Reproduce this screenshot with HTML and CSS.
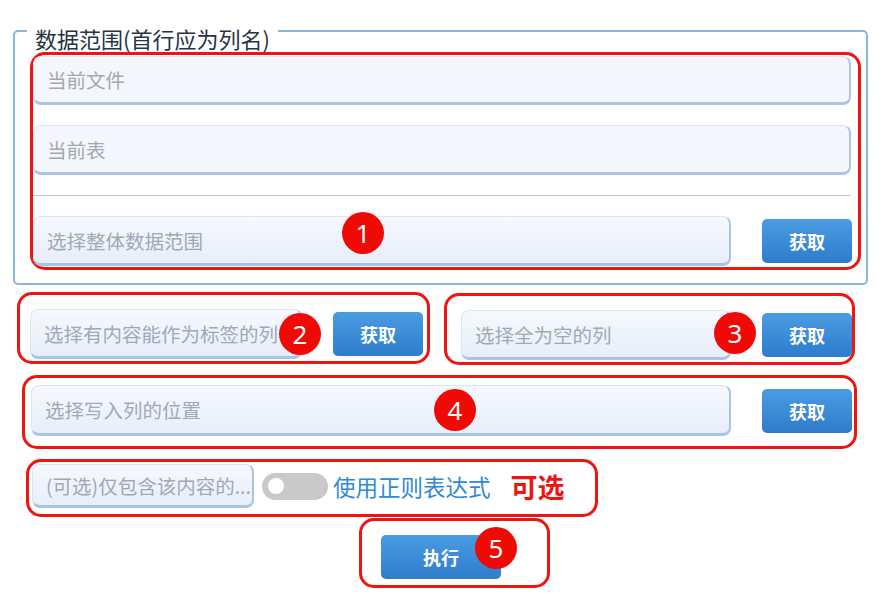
FILE: index.html
```html
<!DOCTYPE html>
<html lang="zh-CN">
<head>
<meta charset="utf-8">
<title>数据范围</title>
<link rel="stylesheet" href="styles.css">
</head>
<body>
<fieldset class="range">
  <legend class="range-title">数据范围(首行应为列名)</legend>
  <div class="mark mark-1">
    <input class="field field-full" placeholder="当前文件">
    <input class="field field-full field-second" placeholder="当前表">
    <hr class="sep">
    <div class="row">
      <input class="field field-grad field-main" placeholder="选择整体数据范围">
      <button class="btn">获取</button>
    </div>
    <span class="badge badge-1">1</span>
  </div>
</fieldset>

<div class="pair">
  <div class="mark mark-2">
    <div class="row">
      <input class="field field-grad field-half-a" placeholder="选择有内容能作为标签的列">
      <button class="btn">获取</button>
    </div>
    <span class="badge badge-2">2</span>
  </div>
  <div class="mark mark-3">
    <div class="row">
      <input class="field field-grad field-half-b" placeholder="选择全为空的列">
      <button class="btn">获取</button>
    </div>
    <span class="badge badge-3">3</span>
  </div>
</div>

<div class="mark mark-4">
  <div class="row">
    <input class="field field-grad field-main field-write" placeholder="选择写入列的位置">
    <button class="btn">获取</button>
  </div>
  <span class="badge badge-4">4</span>
</div>

<div class="mark mark-5">
  <input class="field field-grad field-filter" placeholder="(可选)仅包含该内容的...">
  <span class="switch"><span class="knob"></span></span>
  <span class="regex-label">使用正则表达式</span>
  <span class="optional">可选</span>
</div>

<div class="mark mark-6">
  <button class="btn btn-run">执行</button>
  <span class="badge badge-5">5</span>
</div>
</body>
</html>
```

FILE: styles.css
```css
* {
  box-sizing: border-box;
}

html,
body {
  margin: 0;
  background: #ffffff;
}

body {
  width: 888px;
  height: 602px;
  overflow: hidden;
  font-family: "Noto Sans CJK SC", "Noto Sans", sans-serif;
}

.range {
  margin: 10px 0 0 13px;
  width: 855px;
  min-width: 0;
  border: 2px solid #88b6dc;
  border-radius: 5px;
  padding: 0 5px 13px 15px;
}

.range-title {
  margin-left: -3px;
  padding: 14px 8px 0;
  font-size: 22px;
  line-height: 28px;
  color: #263444;
}

.mark {
  position: relative;
  border: 3px solid #f01410;
  border-radius: 15px;
}

.mark-1 {
  padding: 1px 7px 1px 0;
}

.row {
  display: flex;
  align-items: center;
  gap: 31px;
}

.field {
  display: block;
  height: 50px;
  margin: 0;
  border: 1px solid #d9e5f4;
  border-right: 2px solid #aac5e3;
  border-bottom: 3px solid #aac5e3;
  border-radius: 8px;
  background: #f4f7fd;
  padding: 0 13px;
  font-family: inherit;
  font-size: 19.5px;
  color: #333333;
  outline: none;
  flex: none;
}

.field::placeholder {
  color: #a0a9b4;
}

.field-full {
  width: 100%;
  height: 49px;
}

.field-second {
  margin-top: 20px;
  height: 50px;
}

.sep {
  margin: 20px 0;
  height: 0;
  border: 0;
  border-top: 1px solid #c6c6c6;
}

.field-grad {
  background: linear-gradient(#f6f9fe, #e6eefa);
}

.field-main {
  width: 698px;
}

.btn {
  flex: none;
  width: 90px;
  height: 44px;
  border: 0;
  border-radius: 5px;
  background: linear-gradient(#4a9ce2, #2e7ccb);
  color: #ffffff;
  font-family: inherit;
  font-size: 18px;
  font-weight: 700;
  padding: 0;
}

.badge {
  position: absolute;
  width: 42px;
  height: 42px;
  border-radius: 50%;
  background: #f00a06;
  color: #ffffff;
  font-family: "Noto Sans", sans-serif;
  font-size: 26px;
  line-height: 42px;
  text-align: center;
}

.badge-1 {
  left: 309px;
  top: 157px;
}

.pair {
  display: flex;
  gap: 14px;
  margin: 7px 0 0 17px;
}

.mark-2 {
  width: 413px;
  height: 72px;
  padding: 14px 4px 0 10px;
}

.field-half-a {
  width: 272px;
}

.badge-2 {
  left: 259px;
  top: 18px;
}

.mark-3 {
  width: 411px;
  height: 72px;
  margin-top: 1px;
  padding: 14px 0 0 14px;
}

.field-half-b {
  width: 270px;
}

.badge-3 {
  left: 267px;
  top: 16px;
}

.mark-4 {
  margin: 10px 0 0 22px;
  width: 835px;
  height: 74px;
  padding: 7px 2px 0 6px;
}

.field-write {
  width: 700px;
  height: 51px;
}

.badge-4 {
  left: 409px;
  top: 11px;
}

.mark-5 {
  display: flex;
  align-items: center;
  margin: 10px 0 0 26px;
  width: 572px;
  height: 58px;
  padding: 0 0 4px 3px;
}

.field-filter {
  width: 222px;
  height: 44px;
  padding: 0 0 0 13px;
}

.switch {
  display: flex;
  align-items: center;
  width: 66px;
  height: 27px;
  margin-left: 8px;
  padding-left: 6px;
  border-radius: 14px;
  background: #c9c9c9;
}

.knob {
  width: 16px;
  height: 16px;
  border-radius: 50%;
  background: #ffffff;
}

.regex-label {
  margin-left: 5px;
  font-size: 22.5px;
  color: #2f8ad6;
}

.optional {
  margin-left: 20px;
  font-size: 27px;
  font-weight: 700;
  color: #f01410;
}

.mark-6 {
  margin: 1px 0 0 359px;
  width: 191px;
  height: 70px;
  padding: 14px 0 0 19px;
}

.btn-run {
  width: 120px;
}

.badge-5 {
  left: 113px;
  top: 6px;
}
```
